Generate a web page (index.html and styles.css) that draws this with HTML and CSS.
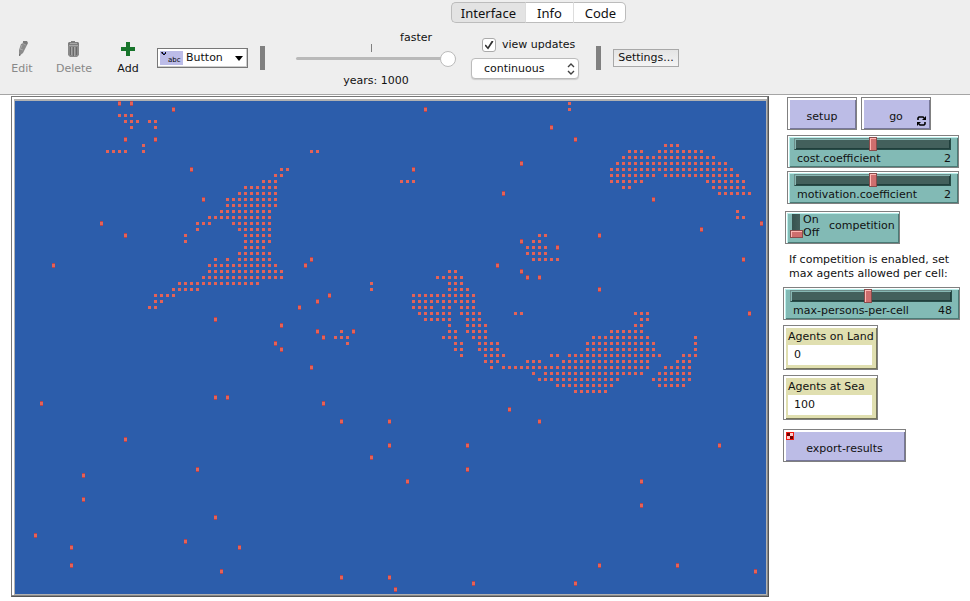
FILE: index.html
```html
<!DOCTYPE html>
<html lang="en">
<head>
<meta charset="utf-8">
<title>Model interface</title>
<link rel="stylesheet" href="styles.css">
</head>
<body>
<header class="toolbar">
  <nav class="tabs">
    <button class="tab active" type="button">Interface</button>
    <button class="tab" type="button">Info</button>
    <button class="tab" type="button">Code</button>
  </nav>
  <div class="tools">
    <button class="tool edit" type="button" disabled>
      <svg width="18" height="18" viewBox="0 0 18 18"><path d="M8 4l5-2 1 0 0 3-4 8-4 3 0-6z" fill="#8b8b8b"/><path d="M9 3l4 2M7 9l3 1M9 5l-2 5" stroke="#a9a9a9" fill="none"/><path d="M10 1h4l1 2-1 2-4-2z" fill="#7c7c7c"/><path d="M6 14l2 1-2 1z" fill="#666"/></svg>
      <span>Edit</span>
    </button>
    <button class="tool delete" type="button" disabled>
      <svg width="18" height="18" viewBox="0 0 18 18"><path d="M6 1h4v1h3l1 1v3H3V3l1-1h2z" fill="#7e7e7e"/><path d="M3 6h11v9l-2 2H5l-2-2z" fill="#8a8a8a"/><path d="M5 3.500h7M4 5.500h9" stroke="#a8a8a8"/><path d="M5.500 7v8M8.500 7v9M11.500 7v8" stroke="#696969"/><path d="M6.500 7v8M9.500 7v9" stroke="#a5a5a5"/></svg>
      <span>Delete</span>
    </button>
    <button class="tool add" type="button">
      <svg width="18" height="18" viewBox="0 0 18 18"><path d="M7 2h4v5h5v4h-5v5H7v-5H2V7h5z" fill="#17742b"/></svg>
      <span>Add</span>
    </button>
    <div class="picker">
      <svg class="picker-icon" width="23" height="14" viewBox="0 0 23 14" aria-hidden="true"><rect width="23" height="14" fill="#bcbce8"/><path d="M1 1h2v1h2V1h1v2H5v1H3V3H2z" fill="#111"/><path d="M3 2h2v1H3z" fill="#3948c0"/><text x="8" y="11" class="picker-abc">abc</text></svg>
      <select class="picker-select" aria-label="Widget type"><option>Button</option></select>
      <svg class="picker-arrow" width="8" height="5" viewBox="0 0 8 5" aria-hidden="true"><path d="M0 0h8L4 5z"/></svg>
    </div>
    <span class="divider"></span>
    <div class="speed">
      <label class="speed-label" for="speed">faster</label>
      <span class="tick"></span>
      <input class="speed-range" id="speed" type="range" min="0" max="100" value="100">
      <span class="years">years: 1000</span>
    </div>
    <div class="updates">
      <label class="check"><input type="checkbox" checked><span>view updates</span></label>
      <div class="mode">
        <select class="mode-select" aria-label="Update mode"><option>continuous</option></select>
        <svg class="mode-arrow" width="8" height="12" viewBox="0 0 8 12" aria-hidden="true"><path d="M1 4l3-3 3 3M1 8l3 3 3-3" fill="none" stroke="#404040" stroke-width="1.4"/></svg>
      </div>
    </div>
    <span class="divider"></span>
    <button class="settings" type="button">Settings...</button>
  </div>
</header>
<main class="workspace">
  <div class="view">
    <svg class="world" viewBox="0 0 751 493" role="img" aria-label="World view" shape-rendering="crispEdges"><rect width="751" height="493" fill="#2c5dab"/><path id="sea" fill="#b3434f"/><path id="patches" fill="#e46257"/></svg>
  </div>
  <aside class="controls">
    <div class="button-row">
      <button class="widget action" type="button">setup</button>
      <button class="widget action" type="button">go
        <svg class="forever" width="9" height="10" viewBox="0 0 9 10" aria-hidden="true"><path d="M1 4V2l1-1h4l1 1M8 6v2L7 9H3L2 8" fill="none" stroke="#000" stroke-width="1.6"/><path d="M9 0v4H5zM0 10V6h4z"/></svg>
      </button>
    </div>
    <div class="widget slider indent cost">
      <input id="cost" type="range" min="0" max="4" value="2">
      <label for="cost">cost.coefficient</label><output for="cost">2</output>
    </div>
    <div class="widget slider indent motivation">
      <input id="motivation" type="range" min="0" max="4" value="2">
      <label for="motivation">motivation.coefficient</label><output for="motivation">2</output>
    </div>
    <label class="widget switch">
      <input type="checkbox">
      <span class="states"><span>On</span><span>Off</span></span>
      <span>competition</span>
    </label>
    <p class="note">If competition is enabled, set<br>max agents allowed per cell:</p>
    <div class="widget slider persons">
      <input id="persons" type="range" min="0" max="100" value="48">
      <label for="persons">max-persons-per-cell</label><output for="persons">48</output>
    </div>
    <div class="widget monitor">
      <span>Agents on Land</span>
      <output>0</output>
    </div>
    <div class="widget monitor">
      <span>Agents at Sea</span>
      <output>100</output>
    </div>
    <button class="widget export" type="button">
      <svg class="observer" width="8" height="8" viewBox="0 0 8 8" shape-rendering="crispEdges" aria-hidden="true"><path d="M0 0h8v8H0z" fill="#f01b12"/><path d="M1 1h3v3H1zM4 4h3v3H4z" fill="#700000"/><path d="M4 1h3v3H4zM1 4h3v3H1z" fill="#ffc8c8"/></svg>
      export-results
    </button>
  </aside>
</main>
<script src="world.js"></script>
</body>
</html>
```
FILE: world.js
```js
// Occupied patches: row number -> column numbers or ranges.
const rows = {
  0: "17 19 92", 1: "26 68 92", 2: "17-19", 3: "18-20 22-23", 4: "19 23 89",
  6: "18 23 93", 7: "21 108-110", 8: "15-18 21 49-50 102-104 107-114",
  9: "101-116", 10: "84 100-118", 11: "29 44-45 66 99-119",
  12: "43-44 99-106 108-120", 13: "41-43 64-66 99-104 115-121",
  14: "38-43 101-102 116-121", 15: "37-43 81 117-122", 16: "31 35-43 106",
  17: "35-43", 18: "34-42 120", 19: "32-42 120-121", 20: "14 30-32 36-42 124",
  21: "30 37-42 114", 22: "18 28 38-42 87-88 97", 23: "28 38-42 84 86-87",
  24: "38-41 85-88 90", 25: "37-42 85-88", 26: "33 35 37-42 49 86-90 121",
  27: "6 32-43 48 80", 28: "32-44 72-73 84", 29: "31-44 70-74 85 87",
  30: "27-40 59 72-74", 31: "26-30 59 72-75 97", 32: "23-26 52 66-76",
  33: "23-24 50 66-76", 34: "22-23 47 66-69 71-72 74-76",
  35: "67-72 74-77 83-84 103-105 122", 36: "33 68-72 75-77 104-105",
  37: "44 72 75-78 103-104", 38: "50 54 56 72-73 75-78 99-104",
  39: "51 53-55 71-73 76-78 96-105 113", 40: "43 55 73-74 77-80 95-106 113",
  41: "44 73-74 77-80 95-106 113", 42: "74 78-81 89-90 92-107 111-113",
  43: "78-80 85-87 91-105 110-112", 44: "49 79 81-105 108-112",
  45: "86 88-104 107-112", 46: "87-100 106-112", 47: "90-99 107-111",
  48: "93-98", 49: "33 35", 50: "4 51", 51: "82", 53: "54 62 87", 56: "18",
  57: "62 75 117", 59: "59", 61: "30 75", 62: "11", 63: "65 104", 66: "11",
  67: "104", 69: "33", 72: "3", 73: "28", 74: "9 37", 77: "9 97 110",
  78: "34 123", 79: "54 62", 80: "76 93", 81: "63"
};
const cells = new Set();
for (const [row, runs] of Object.entries(rows)) {
  for (const run of runs.split(" ")) {
    const [first, last = first] = run.split("-").map(Number);
    for (let col = first; col <= last; col++) cells.add(`${col},${row}`);
  }
}
// Lone agents get a darker cap above and below the square.
let patches = "";
let sea = "";
for (const cell of cells) {
  const [col, row] = cell.split(",").map(Number);
  const x = 1 + col * 6;
  const y = 1 + row * 6;
  const near = [[1, 0], [-1, 0], [0, 1], [0, -1]]
    .some(([dx, dy]) => cells.has(`${col + dx},${row + dy}`));
  patches += `M${x} ${y}h3v3h-3z`;
  if (!near) sea += `M${x} ${y - 1}h3v5h-3z`;
}
document.getElementById("patches").setAttribute("d", patches);
document.getElementById("sea").setAttribute("d", sea);
```
FILE: styles.css
```css
* { box-sizing: border-box; }
body {
  margin: 0;
  background: #fff;
  color: #111;
  font: 11px/14px "DejaVu Sans", "Noto Sans", sans-serif;
}
button, select, input { font: inherit; color: inherit; margin: 0; }
svg { display: block; flex: none; }

.toolbar {
  background: #eee;
  border-bottom: 1px solid #a5a5a5;
  height: 95px;
}
.tabs {
  display: flex;
  justify-content: center;
  padding: 2px 0 0 107px;
}
.tab {
  height: 21px;
  padding: 0 11px;
  border: 1px solid #bcbcbc;
  border-left-color: #ddd;
  border-right: 0;
  background: #fff;
  font: 13px/18px "Noto Sans", sans-serif;
}
.tab:first-child { border-left: 1px solid #bcbcbc; border-radius: 5px 0 0 5px; padding: 0 9px; }
.tab:last-child { border-right: 1px solid #bcbcbc; border-radius: 0 5px 5px 0; padding: 0 9px 0 11px; }
.tab.active { background: #e3e3e3; }

.tools { display: flex; align-items: flex-start; padding-left: 4px; }
.tool {
  display: flex;
  flex-direction: column;
  align-items: center;
  gap: 4px;
  padding: 17px 0 0;
  border: 0;
  background: none;
}
.tool:disabled { color: #888; }
.edit { width: 36px; }
.delete { width: 68px; }
.add { width: 40px; }
.picker { position: relative; margin: 25px 12px 0 9px; width: 91px; }
.picker-select {
  appearance: none;
  display: block;
  width: 100%;
  height: 20px;
  padding: 0 0 0 28px;
  border: 1px solid #777;
  border-radius: 0;
  background: #fff;
  box-shadow: inset -1px -1px #ccc;
}
.picker-icon { position: absolute; left: 3px; top: 3px; }
.picker-abc { font: 7px "DejaVu Sans", sans-serif; }
.picker-arrow { position: absolute; right: 5px; top: 8px; }
.divider { width: 5px; height: 24px; margin-top: 23px; background: #808080; }

.speed {
  display: grid;
  width: 160px;
  margin: 8px 15px 0 31px;
  grid-template-rows: 13px 6px 24px 14px;
}
.speed-label { justify-self: end; margin-right: 24px; }
.tick { width: 1px; height: 8px; margin-left: 75px; background: #808080; }
.speed-range { appearance: none; width: 100%; height: 16px; background: none; }
.speed-range::-webkit-slider-runnable-track { height: 3px; border-radius: 2px; background: #b9b9b9; }
.speed-range::-webkit-slider-thumb {
  appearance: none;
  width: 16px;
  height: 16px;
  margin-top: -6px;
  border: 1px solid #bbb;
  border-radius: 50%;
  background: #fff;
}
.years { justify-self: center; }
.updates { width: 108px; margin: 15px 17px 0 0; }
.check { display: flex; align-items: center; gap: 6px; padding-left: 11px; white-space: nowrap; }
.check input {
  appearance: none;
  width: 14px;
  height: 14px;
  border: 1px solid #aaa;
  border-radius: 3px;
  background: #fff;
  display: grid;
  place-items: center;
}
.check input:checked::before {
  content: "";
  width: 9px;
  height: 9px;
  background: #333;
  clip-path: polygon(0 55%, 15% 45%, 37% 72%, 82% 0, 100% 10%, 40% 100%);
}
.mode { position: relative; margin-top: 6px; }
.mode-select {
  appearance: none;
  display: block;
  width: 100%;
  height: 21px;
  padding: 0 0 0 12px;
  border: 1px solid #bbb;
  border-radius: 4px;
  background: #fff;
  box-shadow: 0 1px 1px #ccc;
}
.mode-arrow { position: absolute; right: 4px; top: 5px; }
.settings {
  width: 66px;
  height: 18px;
  margin: 26px 0 0 12px;
  padding: 0;
  border: 1px solid #a8a8a8;
  background: linear-gradient(#e4e4e4, #f4f4f4);
}

.workspace {
  display: grid;
  grid-template-columns: minmax(0, 1fr) 201px;
  align-items: start;
  padding: 1px 0 0 11px;
}
.view {
  padding: 2px 1px 1px 2px;
  border: 1px solid #777;
  border-bottom-color: #555;
  border-right-color: #555;
  box-shadow: inset -1px -1px #888;
}
.world { width: 100%; height: auto; border: solid #b2b2b2; border-width: 2px 1px 1px; }

.controls { padding: 1px 0 0 14px; }
.widget {
  display: block;
  position: relative;
  border: 1px solid #808080;
  border-radius: 0;
}
.button-row { display: flex; gap: 4px; padding-left: 4px; }
.action, .export {
  background: #bcbce6;
  box-shadow: inset 2px 2px #fff, inset -1px -1px #77779a;
}
.action { width: 70px; height: 33px; padding: 6px 0 0; }
.forever { position: absolute; right: 4px; bottom: 3px; }
.slider, .switch {
  background: #82bab5;
  box-shadow: inset 1px 1px #fff, inset 2px 2px #b9efeb, inset -1px -1px #4a7b76;
}
.slider {
  display: grid;
  grid-template-columns: 1fr auto;
  width: 177px;
  height: 33px;
  padding: 1px 7px 0 6px;
}
.slider.indent { width: 172px; margin-left: 4px; }
.slider label, .slider output { padding-left: 3px; white-space: nowrap; }
.slider input { grid-column: 1 / -1; appearance: none; width: 100%; height: 14px; background: none; }
.slider input::-webkit-slider-runnable-track {
  height: 12px;
  border: 1px solid;
  border-color: #6c8c89 #284c48 #284c48 #6c8c89;
  background: #43605c;
  box-shadow: inset 1px 1px #87b7b3, inset -1px -1px #203f3c;
}
.slider input::-webkit-slider-thumb {
  appearance: none;
  width: 8px;
  height: 14px;
  margin-top: -2px;
  border: 1px solid #884c4c;
  background: #cf6e6e;
  box-shadow: inset 1px 1px #ffb7b3;
}
.cost { margin-top: 5px; }
.motivation { margin-top: 3px; }
.switch {
  display: flex;
  align-items: center;
  width: 115px;
  height: 33px;
  margin: 7px 0 0 2px;
  padding: 0 0 3px 4px;
}
.switch input {
  appearance: none;
  position: relative;
  width: 13px;
  height: 24px;
  background: linear-gradient(90deg, transparent 2px, #36534f 2px, #43605c 10px, transparent 10px);
}
.switch input::before {
  content: "";
  position: absolute;
  inset: 16px 0 0;
  border: 1px solid #884c4c;
  background: #cf6e6e;
  box-shadow: inset 1px 1px #ffb7b3;
}
.switch input:checked::before { inset: 0 0 16px; }
.states { display: grid; width: 26px; line-height: 13px; }
.note { margin: 9px 0 6px 6px; white-space: nowrap; }
.monitor {
  width: 95px;
  height: 45px;
  margin-top: 5px;
  padding: 4px;
  background: #e0dfb0;
  box-shadow: inset 2px 2px #fff, inset -1px -1px #74745a;
  white-space: nowrap;
}
.monitor output { display: block; height: 20px; margin: 1px 1px 0 0; padding: 3px 6px; background: #fff; }
.export { width: 123px; height: 33px; margin-top: 9px; padding: 6px 0 0; }
.observer { position: absolute; left: 2px; top: 2px; }
```
